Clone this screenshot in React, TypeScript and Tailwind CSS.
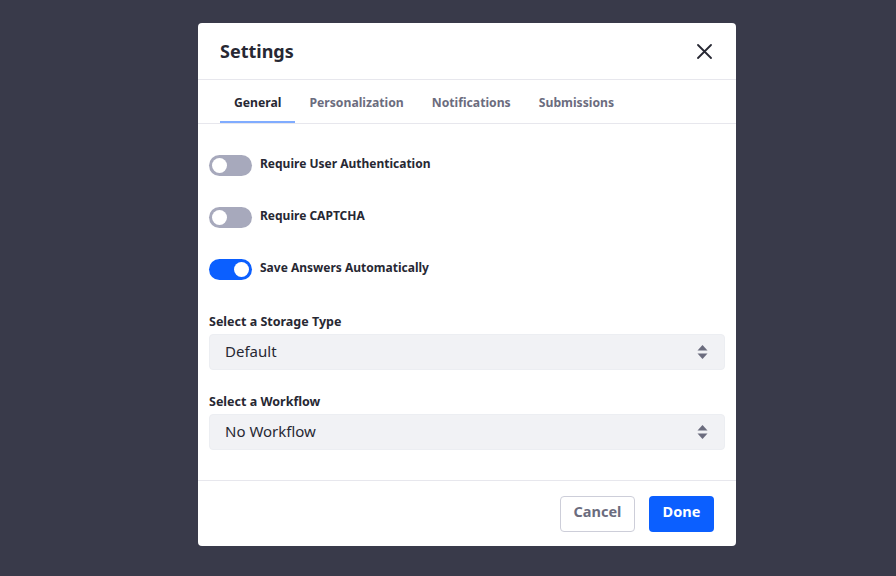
import React from "react";

function Toggle({ on }: { on?: boolean }) {
  return (
    <div
      className={`relative w-[43px] h-[21px] rounded-full shrink-0 ${on ? "bg-[#0b5fff]" : "bg-[#a7a9bc]"}`}
    >
      <div
        className={`absolute top-[3px] w-[15px] h-[15px] rounded-full bg-white ${on ? "left-[25px]" : "left-[3px]"}`}
      />
    </div>
  );
}

function SelectBox({ value }: { value: string }) {
  return (
    <div className="flex items-center justify-between h-[36px] rounded-[4px] bg-[#f1f2f5] border border-[#eceef2] pl-[15px] pr-[16px] text-[15px] text-[#272833]">
      <span className="-mt-[1px]">{value}</span>
      <svg width="11" height="16" viewBox="0 0 11 16">
        <path d="M5.5 1 L10.5 6.5 L0.5 6.5 Z" fill="#6b6c7e" />
        <path d="M5.5 15 L10.5 9.5 L0.5 9.5 Z" fill="#6b6c7e" />
      </svg>
    </div>
  );
}

export default function App() {
  const tabs = ["General", "Personalization", "Notifications", "Submissions"];
  return (
    <div
      className="w-[896px] h-[576px] bg-[#393a4a] flex pl-[198px] pt-[23px]"
      style={{ fontFamily: '"Noto Sans", "Open Sans", sans-serif' }}
    >
      <div className="w-[538px] h-[523px] bg-white rounded-[4px] flex flex-col">
        <div className="h-[57px] flex items-center justify-between pl-[22px] pr-[24px] border-b border-[#e7e7ed]">
          <span className="text-[18px] font-bold text-[#272833]">Settings</span>
          <svg width="15" height="15" viewBox="0 0 15 15">
            <path d="M1 1 L14 14 M14 1 L1 14" stroke="#272833" strokeWidth="1.8" strokeLinecap="round" />
          </svg>
        </div>
        <div className="h-[44px] flex pl-[22px] border-b border-[#e7e7ed]">
          {tabs.map((t, i) => (
            <div
              key={t}
              className={`px-[14px] flex items-center text-[12.2px] font-bold ${i === 0 ? "text-[#272833] border-b-2 border-[#80acff]" : "text-[#6b6c7e] border-b-2 border-transparent"}`}
            >
              <span className="pt-[6px]">{t}</span>
            </div>
          ))}
        </div>
        <div className="flex-1 px-[11px] pt-[31px]">
          <div className="flex flex-col gap-[31px]">
            <div className="flex items-center gap-[8px]">
              <Toggle />
              <span className="text-[12px] font-bold text-[#272833] -mt-[3px]">Require User Authentication</span>
            </div>
            <div className="flex items-center gap-[8px]">
              <Toggle />
              <span className="text-[12px] font-bold text-[#272833] -mt-[3px]">Require CAPTCHA</span>
            </div>
            <div className="flex items-center gap-[8px]">
              <Toggle on />
              <span className="text-[12px] font-bold text-[#272833] -mt-[3px]">Save Answers Automatically</span>
            </div>
          </div>
          <div className="mt-[33px]">
            <div className="text-[12.5px] font-bold text-[#272833] mb-[2px]">Select a Storage Type</div>
            <SelectBox value="Default" />
          </div>
          <div className="mt-[23px]">
            <div className="text-[12.5px] font-bold text-[#272833] mb-[2px]">Select a Workflow</div>
            <SelectBox value="No Workflow" />
          </div>
        </div>
        <div className="h-[66px] border-t border-[#e7e7ed] flex items-center justify-end gap-[14px] pr-[22px]">
          <button className="h-[36px] w-[75px] rounded-[4px] border border-[#cdced9] bg-white text-[14.5px] font-bold text-[#6b6c7e] pb-[3px]">
            Cancel
          </button>
          <button className="h-[36px] w-[65px] rounded-[4px] bg-[#0b5fff] text-[14.5px] font-bold text-white pb-[3px]">
            Done
          </button>
        </div>
      </div>
    </div>
  );
}
